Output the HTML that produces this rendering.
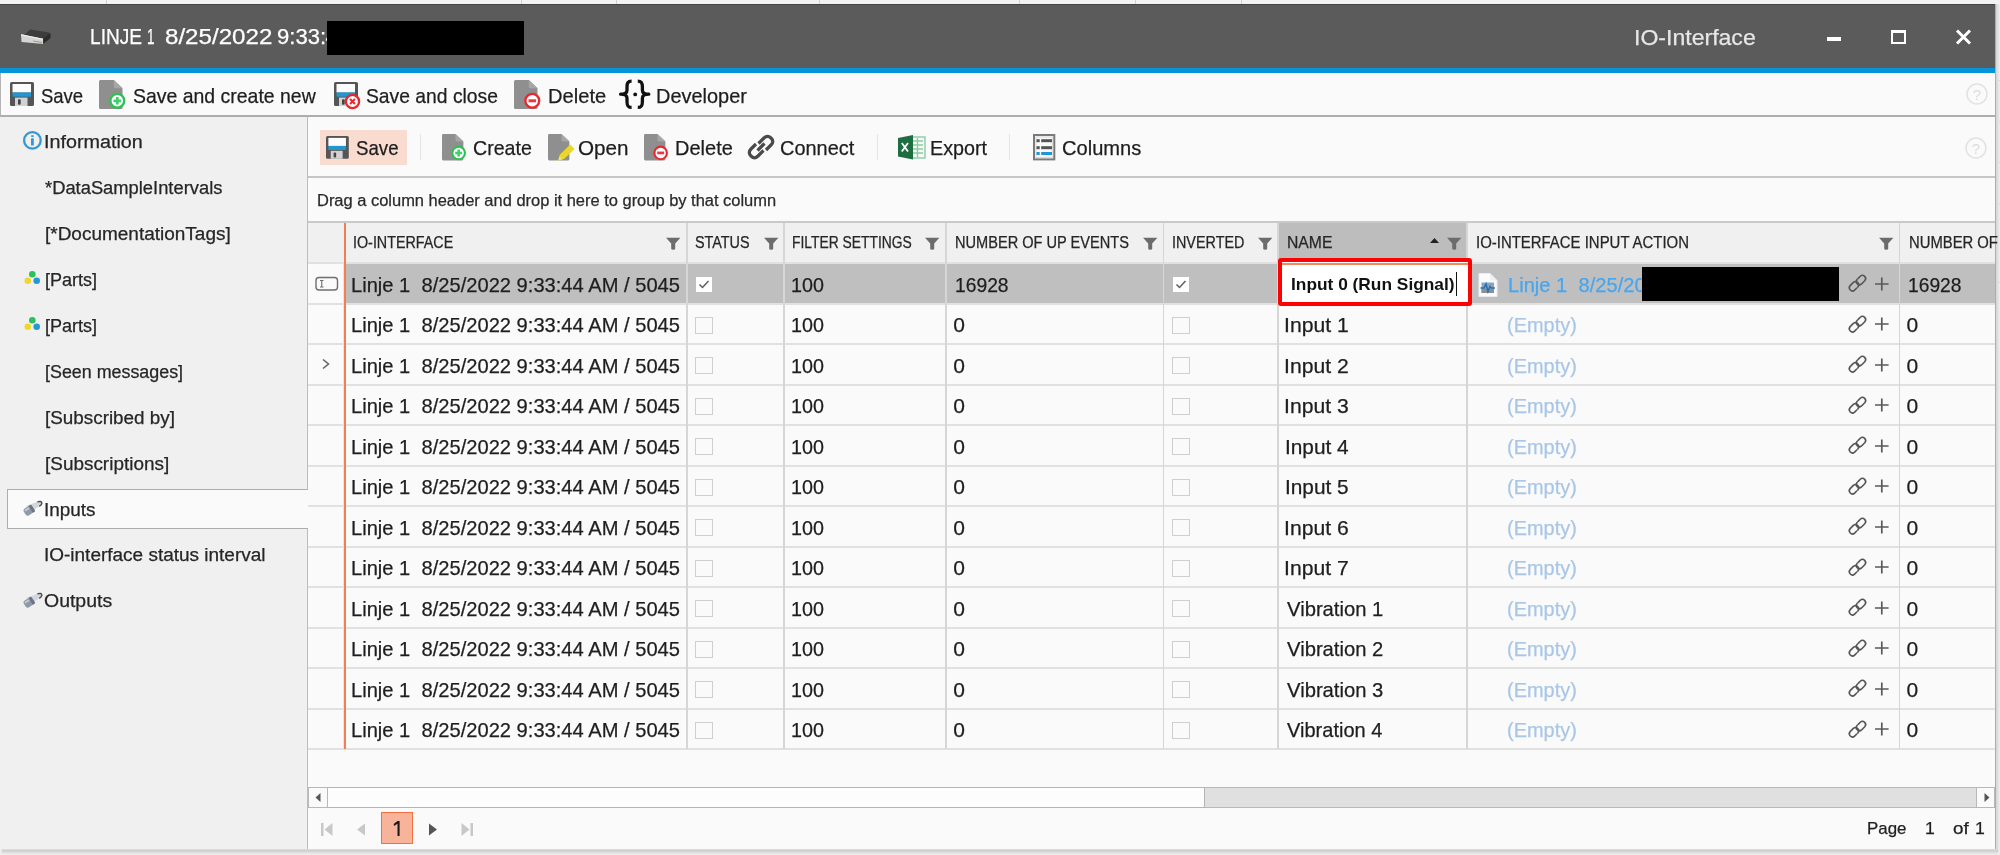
<!DOCTYPE html>
<html><head><meta charset="utf-8">
<style>
*{margin:0;padding:0;box-sizing:border-box}
html,body{width:2000px;height:855px;overflow:hidden;background:#ededed;font-family:"Liberation Sans",sans-serif;position:relative}
.a{position:absolute}
svg.a{overflow:visible}
.t{position:absolute;white-space:pre;line-height:1;-webkit-text-stroke:0.25px currentColor;transform-origin:0 0}
</style></head><body>
<div id="root" style="position:absolute;left:0;top:0;width:2000px;height:855px;will-change:transform;overflow:hidden">
<div class="a" style="left:0px;top:0px;width:2000px;height:855px;background:#ececec"></div>
<div class="a" style="left:0px;top:0px;width:2000px;height:4px;background:#f3f3f3"></div>
<div class="a" style="left:106px;top:0px;width:1px;height:4px;background:#d2d2d2"></div>
<div class="a" style="left:521px;top:0px;width:1px;height:4px;background:#d2d2d2"></div>
<div class="a" style="left:616px;top:0px;width:1px;height:4px;background:#d2d2d2"></div>
<div class="a" style="left:819px;top:0px;width:1px;height:4px;background:#d2d2d2"></div>
<div class="a" style="left:1019px;top:0px;width:1px;height:4px;background:#d2d2d2"></div>
<div class="a" style="left:1135px;top:0px;width:1px;height:4px;background:#d2d2d2"></div>
<div class="a" style="left:1241px;top:0px;width:1px;height:4px;background:#d2d2d2"></div>
<div class="a" style="left:1996px;top:80px;width:4px;height:1px;background:#d6d6d6"></div>
<div class="a" style="left:1996px;top:121px;width:4px;height:1px;background:#d6d6d6"></div>
<div class="a" style="left:1996px;top:162px;width:4px;height:1px;background:#d6d6d6"></div>
<div class="a" style="left:1996px;top:203px;width:4px;height:1px;background:#d6d6d6"></div>
<div class="a" style="left:1996px;top:282px;width:4px;height:1px;background:#d6d6d6"></div>
<div class="a" style="left:0px;top:4px;width:1996px;height:845px;background:#fafafa;border-right:1.5px solid #adadad"></div>
<div class="a" style="left:1996px;top:4px;width:3px;height:848px;background:linear-gradient(90deg,#d4d4d4,#e8e8e8)"></div>
<div class="a" style="left:2px;top:849px;width:1996px;height:5px;background:linear-gradient(#e0e0e0,#cfcfcf 30%,#d6d6d6 55%,#ececec)"></div>
<div class="a" style="left:0px;top:4px;width:1995px;height:64px;background:#5b5b5b;border-top:1px solid #444"></div>
<div class="a" style="left:0px;top:68px;width:1995px;height:5.5px;background:#0594d8"></div>
<div class="a" style="left:0px;top:73px;width:1995px;height:44px;background:#fafafa;border-left:1px solid #b4b4b4;border-bottom:2px solid #adadad"></div>
<div class="a" style="left:0px;top:117px;width:308px;height:732px;background:#f0f0f0;border-right:1px solid #bdbdbd"></div>
<div class="a" style="left:308px;top:117px;width:1687px;height:61px;background:#fafafa;border-bottom:2px solid #c6c6c6"></div>
<div class="a" style="left:308px;top:178px;width:1687px;height:45px;background:#fafafa;border-bottom:2px solid #c9c9c9"></div>
<svg class="a" style="left:18px;top:24px" width="36" height="22" viewBox="0 0 36 22">
<path d="M12 5.5 L31 8.5 L33 10.5 L25.5 17 L4 13.5 Z" fill="#3c3c3c"/>
<path d="M3 10.3 L25.2 14.8 L25.2 20 L3.5 18 Z" fill="#d4d4d4"/>
<path d="M3 10.3 L25.2 14.8 L25.2 15.8 L3 11.5 Z" fill="#f0f0f0"/>
<path d="M25.2 14.8 L32.5 9.3 L32.5 14 L25.2 20 Z" fill="#2c2c2c"/>
<path d="M15 16.5 L24 18 L24 19 L15 17.5 Z" fill="#a89c70"/>
</svg>
<div class="t" style="left:89.90px;top:25.75px;font-size:22.5px;color:#ffffff;transform:scaleX(0.8492)">LINJE</div>
<div class="t" style="left:146.50px;top:25.75px;font-size:22.5px;color:#ffffff;transform:scaleX(0.6000)">1</div>
<div class="t" style="left:164.63px;top:25.75px;font-size:22.5px;color:#ffffff;transform:scaleX(1.0724)">8/25/2022</div>
<div class="t" style="left:276.72px;top:25.75px;font-size:22.5px;color:#ffffff;transform:scaleX(0.9809)">9:33:</div>
<div class="t" style="left:325.50px;top:25.75px;font-size:22.5px;color:#ffffff">4</div>
<div class="a" style="left:327px;top:21px;width:197px;height:34px;background:#000"></div>
<div class="t" style="left:1633.50px;top:27.18px;font-size:22px;color:#e6e6e6;transform:scaleX(1.0478)">IO-Interface</div>
<div class="a" style="left:1827px;top:37px;width:14px;height:4px;background:#fff"></div>
<div class="a" style="left:1891px;top:30px;width:15px;height:14px;border:2px solid #fff;border-top-width:3px"></div>
<svg class="a" style="left:1955px;top:29px" width="17" height="16" viewBox="0 0 17 16"><path d="M2 1.5 L15 14.5 M15 1.5 L2 14.5" stroke="#fff" stroke-width="3"/></svg>
<svg class="a" style="left:9.5px;top:82.3px" width="28.00" height="28.00" viewBox="0 0 28 28"><rect x="0" y="0" width="24" height="24" rx="1.6" fill="#555"/><rect x="2.5" y="2" width="18.5" height="8.6" fill="#fcfcfc"/><rect x="2.5" y="10.4" width="18.5" height="4.3" fill="#2196d0"/><rect x="5" y="15.6" width="12.5" height="8.4" fill="#d2d2d2"/><rect x="8" y="17.3" width="2.7" height="5.4" rx="1" fill="#444"/></svg>
<div class="t" style="left:41.42px;top:84.92px;font-size:21px;color:#1e1e1e;transform:scaleX(0.8804)">Save</div>
<svg class="a" style="left:99.25px;top:80px" width="30.00" height="30.00" viewBox="0 0 30 30"><path d="M1.5 0 H14.8 L23.5 8.2 V27.5 Q23.5 29 22 29 H1.5 Q0 29 0 27.5 V1.5 Q0 0 1.5 0 Z" fill="#8f8f8f"/><path d="M14.8 0 L14.8 6.7 Q14.8 8.2 16.3 8.2 L23.5 8.2 Z" fill="#a6a6a6"/><circle cx="18.3" cy="20.8" r="6.9" fill="#fff" stroke="#2cc155" stroke-width="2.3"/><path d="M18.3 17 L18.3 24.6 M14.5 20.8 L22.1 20.8" stroke="#3fd068" stroke-width="2.8"/></svg>
<div class="t" style="left:132.67px;top:84.92px;font-size:21px;color:#1e1e1e;transform:scaleX(0.9259)">Save and create new</div>
<svg class="a" style="left:333.5px;top:82.3px" width="28.00" height="28.00" viewBox="0 0 28 28"><rect x="0" y="0" width="24" height="24" rx="1.6" fill="#555"/><rect x="2.5" y="2" width="18.5" height="8.6" fill="#fcfcfc"/><rect x="2.5" y="10.4" width="18.5" height="4.3" fill="#2196d0"/><rect x="5" y="15.6" width="12.5" height="8.4" fill="#d2d2d2"/><rect x="8" y="17.3" width="2.7" height="5.4" rx="1" fill="#444"/><circle cx="18.5" cy="19.5" r="6.6" fill="#fff" stroke="#e8282e" stroke-width="2.4"/><path d="M16 17 L21 22 M21 17 L16 22" stroke="#e8282e" stroke-width="2"/></svg>
<div class="t" style="left:365.68px;top:84.92px;font-size:21px;color:#1e1e1e;transform:scaleX(0.9190)">Save and close</div>
<svg class="a" style="left:513.6px;top:80px" width="30.00" height="30.00" viewBox="0 0 30 30"><path d="M1.5 0 H14.8 L23.5 8.2 V27.5 Q23.5 29 22 29 H1.5 Q0 29 0 27.5 V1.5 Q0 0 1.5 0 Z" fill="#8f8f8f"/><path d="M14.8 0 L14.8 6.7 Q14.8 8.2 16.3 8.2 L23.5 8.2 Z" fill="#a6a6a6"/><circle cx="18.3" cy="20.8" r="6.9" fill="#fff" stroke="#e8282e" stroke-width="2.3"/><path d="M14.5 20.8 L22.1 20.8" stroke="#ea3a40" stroke-width="3"/></svg>
<div class="t" style="left:547.84px;top:84.92px;font-size:21px;color:#1e1e1e;transform:scaleX(0.9593)">Delete</div>
<svg class="a" style="left:619px;top:79px" width="32" height="32" viewBox="0 0 32 32"><g fill="none" stroke="#111" stroke-width="3.3" stroke-linejoin="round">
<path d="M12.6 2.2 C8.6 2.2 8 4.4 8 8 L8 11.2 C8 13.6 5.8 15.2 1.6 15.2 C5.8 15.2 8 16.8 8 19.2 L8 22.4 C8 26 8.6 28.4 12.6 28.4"/>
<path d="M18.8 2.2 C22.8 2.2 23.4 4.4 23.4 8 L23.4 11.2 C23.4 13.6 25.6 15.2 29.8 15.2 C25.6 15.2 23.4 16.8 23.4 19.2 L23.4 22.4 C23.4 26 22.8 28.4 18.8 28.4"/></g>
<circle cx="16.2" cy="15.4" r="1.9" fill="#111"/></svg>
<div class="t" style="left:655.65px;top:84.92px;font-size:21px;color:#1e1e1e;transform:scaleX(0.9495)">Developer</div>
<svg class="a" style="left:1966px;top:83px" width="22" height="22" viewBox="0 0 22 22"><circle cx="11" cy="11" r="10" fill="none" stroke="#e2e2e2" stroke-width="1.5"/><text x="11" y="16.5" font-family="Liberation Sans" font-size="15" fill="#dcdcdc" text-anchor="middle">?</text></svg>
<div class="a" style="left:7px;top:489px;width:301px;height:40px;background:#fafafa;border:1.3px solid #adadad;border-right:none"></div>
<div class="t" style="left:44.30px;top:133.36px;font-size:18px;color:#262626;transform:scaleX(1.0966)">Information</div>
<div class="t" style="left:45.40px;top:179.36px;font-size:18px;color:#262626;transform:scaleX(1.0190)">*DataSampleIntervals</div>
<div class="t" style="left:44.85px;top:225.36px;font-size:18px;color:#262626;transform:scaleX(1.0546)">[*DocumentationTags]</div>
<div class="t" style="left:44.90px;top:271.46px;font-size:18px;color:#262626">[Parts]</div>
<div class="t" style="left:44.90px;top:317.26px;font-size:18px;color:#262626">[Parts]</div>
<div class="t" style="left:44.91px;top:363.16px;font-size:18px;color:#262626;transform:scaleX(0.9927)">[Seen messages]</div>
<div class="t" style="left:44.85px;top:409.26px;font-size:18px;color:#262626;transform:scaleX(1.0475)">[Subscribed by]</div>
<div class="t" style="left:44.85px;top:454.86px;font-size:18px;color:#262626;transform:scaleX(1.0517)">[Subscriptions]</div>
<div class="t" style="left:44.35px;top:500.76px;font-size:18px;color:#262626;transform:scaleX(1.0521)">Inputs</div>
<div class="t" style="left:44.35px;top:546.16px;font-size:18px;color:#262626;transform:scaleX(1.0543)">IO-interface status interval</div>
<div class="t" style="left:44.32px;top:591.96px;font-size:18px;color:#262626;transform:scaleX(1.0806)">Outputs</div>
<svg class="a" style="left:22px;top:130px" width="21" height="21" viewBox="0 0 21 21"><circle cx="10.4" cy="10.4" r="8.3" fill="none" stroke="#3598d0" stroke-width="2.3"/><rect x="9.2" y="5.2" width="2.4" height="1.8" fill="#3598d0"/><rect x="9" y="8.2" width="2.8" height="7.4" rx="0.6" fill="#3598d0"/></svg>
<svg class="a" style="left:23.8px;top:270px" width="18" height="16" viewBox="0 0 18 16"><circle cx="8.3" cy="4.2" r="3.3" fill="#2fbf5c"/><circle cx="3.8" cy="10.7" r="3.3" fill="#f0d828"/><circle cx="12.7" cy="10.7" r="3.3" fill="#2a96d0"/></svg>
<svg class="a" style="left:23.8px;top:316px" width="18" height="16" viewBox="0 0 18 16"><circle cx="8.3" cy="4.2" r="3.3" fill="#2fbf5c"/><circle cx="3.8" cy="10.7" r="3.3" fill="#f0d828"/><circle cx="12.7" cy="10.7" r="3.3" fill="#2a96d0"/></svg>
<svg class="a" style="left:21px;top:499px" width="24" height="18" viewBox="0 0 24 18"><path d="M5 7 L16.5 2.8 Q20.5 1.6 20.8 4.2 Q20.8 6 18.5 7.3 L11 12 Z" fill="#d3d7dc"/>
<path d="M16.3 2.9 Q20.5 1.6 20.8 4.2 Q20.8 6 18.3 7.4" fill="none" stroke="#4e4e4e" stroke-width="1.5"/>
<g transform="rotate(-33 8 11.5)"><rect x="3" y="7.5" width="10" height="8" rx="2.5" fill="#8e9aa9"/><rect x="10" y="7.5" width="3" height="8" rx="1" fill="#6c7684"/><rect x="4.5" y="8.5" width="5" height="2" fill="#c3cad3"/></g></svg>
<svg class="a" style="left:21px;top:591px" width="24" height="18" viewBox="0 0 24 18"><path d="M5 7 L16.5 2.8 Q20.5 1.6 20.8 4.2 Q20.8 6 18.5 7.3 L11 12 Z" fill="#d3d7dc"/>
<path d="M16.3 2.9 Q20.5 1.6 20.8 4.2 Q20.8 6 18.3 7.4" fill="none" stroke="#4e4e4e" stroke-width="1.5"/>
<g transform="rotate(-33 8 11.5)"><rect x="3" y="7.5" width="10" height="8" rx="2.5" fill="#8e9aa9"/><rect x="10" y="7.5" width="3" height="8" rx="1" fill="#6c7684"/><rect x="4.5" y="8.5" width="5" height="2" fill="#c3cad3"/></g></svg>
<div class="a" style="left:320px;top:130px;width:87px;height:35px;background:#f9dbd0"></div>
<svg class="a" style="left:325.6px;top:136px" width="26.60" height="26.60" viewBox="0 0 28 28"><rect x="0" y="0" width="24" height="24" rx="1.6" fill="#555"/><rect x="2.5" y="2" width="18.5" height="8.6" fill="#fcfcfc"/><rect x="2.5" y="10.4" width="18.5" height="4.3" fill="#2196d0"/><rect x="5" y="15.6" width="12.5" height="8.4" fill="#d2d2d2"/><rect x="8" y="17.3" width="2.7" height="5.4" rx="1" fill="#444"/></svg>
<div class="t" style="left:355.81px;top:137.12px;font-size:21px;color:#1e1e1e;transform:scaleX(0.8891)">Save</div>
<div class="a" style="left:420px;top:134px;width:1px;height:26px;background:#e4e4e4"></div>
<svg class="a" style="left:441.8px;top:134px" width="27.30" height="27.30" viewBox="0 0 30 30"><path d="M1.5 0 H14.8 L23.5 8.2 V27.5 Q23.5 29 22 29 H1.5 Q0 29 0 27.5 V1.5 Q0 0 1.5 0 Z" fill="#8f8f8f"/><path d="M14.8 0 L14.8 6.7 Q14.8 8.2 16.3 8.2 L23.5 8.2 Z" fill="#a6a6a6"/><circle cx="18.3" cy="20.8" r="6.9" fill="#fff" stroke="#2cc155" stroke-width="2.3"/><path d="M18.3 17 L18.3 24.6 M14.5 20.8 L22.1 20.8" stroke="#3fd068" stroke-width="2.8"/></svg>
<div class="t" style="left:473.07px;top:137.12px;font-size:21px;color:#1e1e1e;transform:scaleX(0.9344)">Create</div>
<svg class="a" style="left:547.8px;top:133.8px" width="27.30" height="27.30" viewBox="0 0 30 30"><path d="M1.5 0 H14.8 L23.5 8.2 V27.5 Q23.5 29 22 29 H1.5 Q0 29 0 27.5 V1.5 Q0 0 1.5 0 Z" fill="#8f8f8f"/><path d="M14.8 0 L14.8 6.7 Q14.8 8.2 16.3 8.2 L23.5 8.2 Z" fill="#a6a6a6"/><path d="M11.3 29.3 L12.9 22.7 L24.5 11.5 L29.1 16.6 L17.6 27.6 Z" fill="#ebd727"/><path d="M11.3 29.3 L12.6 24.5 L15.8 27.6 Z" fill="#f3e27a"/></svg>
<div class="t" style="left:578.02px;top:137.12px;font-size:21px;color:#1e1e1e;transform:scaleX(0.9837)">Open</div>
<svg class="a" style="left:644.3px;top:134px" width="27.30" height="27.30" viewBox="0 0 30 30"><path d="M1.5 0 H14.8 L23.5 8.2 V27.5 Q23.5 29 22 29 H1.5 Q0 29 0 27.5 V1.5 Q0 0 1.5 0 Z" fill="#8f8f8f"/><path d="M14.8 0 L14.8 6.7 Q14.8 8.2 16.3 8.2 L23.5 8.2 Z" fill="#a6a6a6"/><circle cx="18.3" cy="20.8" r="6.9" fill="#fff" stroke="#e8282e" stroke-width="2.3"/><path d="M14.5 20.8 L22.1 20.8" stroke="#ea3a40" stroke-width="3"/></svg>
<div class="t" style="left:675.05px;top:137.12px;font-size:21px;color:#1e1e1e;transform:scaleX(0.9525)">Delete</div>
<svg class="a" style="left:747px;top:133px" width="28" height="28" viewBox="0 0 28 28"><g fill="none" stroke="#4a4a4a" stroke-width="3.2"><path d="M11.5 10.5 L17 5 Q20.5 1.5 24 5 Q27.5 8.5 24 12 L19 17"/><path d="M16.5 17.5 L11 23 Q7.5 26.5 4 23 Q0.5 19.5 4 16 L9 11"/><path d="M10.5 17.5 L17.5 10.5"/></g></svg>
<div class="t" style="left:779.55px;top:137.12px;font-size:21px;color:#1e1e1e;transform:scaleX(0.9494)">Connect</div>
<div class="a" style="left:877px;top:134px;width:1px;height:26px;background:#e4e4e4"></div>
<svg class="a" style="left:897.6px;top:135px" width="28" height="25" viewBox="0 0 28 25"><rect x="11" y="2" width="16" height="21" fill="#f4faf6" stroke="#7cc39a" stroke-width="1.2"/>
<path d="M14 6 H25 M14 10 H25 M14 14 H25 M14 18 H25 M19.5 3 V22" stroke="#8fcaa6" stroke-width="1.3"/>
<path d="M0 3 L15 0 L15 24.4 L0 21.4 Z" fill="#1d6f42"/>
<path d="M3.8 8 L10 16.5 M10 8 L3.8 16.5" stroke="#fff" stroke-width="1.8"/></svg>
<div class="t" style="left:929.66px;top:137.12px;font-size:21px;color:#1e1e1e;transform:scaleX(0.9400)">Export</div>
<div class="a" style="left:1009px;top:134px;width:1px;height:26px;background:#e4e4e4"></div>
<svg class="a" style="left:1032.9px;top:133.8px" width="23" height="27" viewBox="0 0 23 27"><rect x="1" y="1" width="20.3" height="24.4" fill="#fafafa" stroke="#7a7a7a" stroke-width="2"/>
<rect x="3" y="3" width="16.3" height="20.4" fill="none" stroke="#d8d8d8" stroke-width="1"/>
<rect x="3.5" y="5.2" width="3.2" height="3" fill="#555"/><rect x="8.2" y="5.2" width="10.8" height="3" fill="#555"/>
<rect x="3.5" y="12.2" width="3.2" height="3" fill="#555"/><rect x="8.2" y="12.2" width="10.8" height="3" fill="#555"/>
<rect x="3.5" y="18" width="3.2" height="3" fill="#1e96dc"/><rect x="8.2" y="18" width="10.8" height="3" fill="#1e96dc"/></svg>
<div class="t" style="left:1061.84px;top:137.12px;font-size:21px;color:#1e1e1e;transform:scaleX(0.9568)">Columns</div>
<svg class="a" style="left:1965px;top:137px" width="22" height="22" viewBox="0 0 22 22"><circle cx="11" cy="11" r="10" fill="none" stroke="#e2e2e2" stroke-width="1.5"/><text x="11" y="16.5" font-family="Liberation Sans" font-size="15" fill="#dcdcdc" text-anchor="middle">?</text></svg>
<div class="t" style="left:316.87px;top:192.66px;font-size:16px;color:#2a2a2a;transform:scaleX(1.0283)">Drag a column header and drop it here to group by that column</div>
<div class="a" style="left:308px;top:223px;width:1687px;height:40px;background:#f0f0f0"></div>
<div class="a" style="left:1279px;top:223px;width:188px;height:40px;background:#bdbdbd"></div>
<div class="a" style="left:346px;top:263.0px;width:1649px;height:40.5px;background:#bfbfbf"></div>
<div class="a" style="left:346px;top:303.5px;width:1649px;height:40.5px;background:#fafafa"></div>
<div class="a" style="left:346px;top:344.0px;width:1649px;height:40.5px;background:#fafafa"></div>
<div class="a" style="left:346px;top:384.5px;width:1649px;height:40.5px;background:#fafafa"></div>
<div class="a" style="left:346px;top:425.0px;width:1649px;height:40.5px;background:#fafafa"></div>
<div class="a" style="left:346px;top:465.5px;width:1649px;height:40.5px;background:#fafafa"></div>
<div class="a" style="left:346px;top:506.0px;width:1649px;height:40.5px;background:#fafafa"></div>
<div class="a" style="left:346px;top:546.5px;width:1649px;height:40.5px;background:#fafafa"></div>
<div class="a" style="left:346px;top:587.0px;width:1649px;height:40.5px;background:#fafafa"></div>
<div class="a" style="left:346px;top:627.5px;width:1649px;height:40.5px;background:#fafafa"></div>
<div class="a" style="left:346px;top:668.0px;width:1649px;height:40.5px;background:#fafafa"></div>
<div class="a" style="left:346px;top:708.5px;width:1649px;height:40.5px;background:#fafafa"></div>
<div class="a" style="left:308px;top:262.0px;width:1687px;height:2px;background:#e1e1e1"></div>
<div class="a" style="left:308px;top:302.5px;width:1687px;height:2px;background:#e1e1e1"></div>
<div class="a" style="left:308px;top:343.0px;width:1687px;height:2px;background:#e1e1e1"></div>
<div class="a" style="left:308px;top:383.5px;width:1687px;height:2px;background:#e1e1e1"></div>
<div class="a" style="left:308px;top:424.0px;width:1687px;height:2px;background:#e1e1e1"></div>
<div class="a" style="left:308px;top:464.5px;width:1687px;height:2px;background:#e1e1e1"></div>
<div class="a" style="left:308px;top:505.0px;width:1687px;height:2px;background:#e1e1e1"></div>
<div class="a" style="left:308px;top:545.5px;width:1687px;height:2px;background:#e1e1e1"></div>
<div class="a" style="left:308px;top:586.0px;width:1687px;height:2px;background:#e1e1e1"></div>
<div class="a" style="left:308px;top:626.5px;width:1687px;height:2px;background:#e1e1e1"></div>
<div class="a" style="left:308px;top:667.0px;width:1687px;height:2px;background:#e1e1e1"></div>
<div class="a" style="left:308px;top:707.5px;width:1687px;height:2px;background:#e1e1e1"></div>
<div class="a" style="left:308px;top:748.0px;width:1687px;height:2px;background:#e1e1e1"></div>
<div class="a" style="left:686px;top:223px;width:1.7px;height:526.0px;background:#d6d6d6"></div>
<div class="a" style="left:783px;top:223px;width:1.7px;height:526.0px;background:#d6d6d6"></div>
<div class="a" style="left:945px;top:223px;width:1.7px;height:526.0px;background:#d6d6d6"></div>
<div class="a" style="left:1162.6px;top:223px;width:1.7px;height:526.0px;background:#d6d6d6"></div>
<div class="a" style="left:1277.2px;top:223px;width:1.7px;height:526.0px;background:#d6d6d6"></div>
<div class="a" style="left:1466.4px;top:223px;width:1.7px;height:526.0px;background:#d6d6d6"></div>
<div class="a" style="left:1898.8px;top:223px;width:1.7px;height:526.0px;background:#d6d6d6"></div>
<div class="a" style="left:343px;top:263px;width:1px;height:486.0px;background:#e6e6e6"></div>
<div class="a" style="left:344px;top:223px;width:2px;height:526.0px;background:#f07f56"></div>
<div class="t" style="left:352.61px;top:234.86px;font-size:16px;color:#262626;transform:scaleX(0.8946)">IO-INTERFACE</div>
<div class="t" style="left:694.85px;top:234.86px;font-size:16px;color:#262626;transform:scaleX(0.8983)">STATUS</div>
<div class="t" style="left:791.88px;top:234.86px;font-size:16px;color:#262626;transform:scaleX(0.8657)">FILTER SETTINGS</div>
<div class="t" style="left:955.09px;top:234.86px;font-size:16px;color:#262626;transform:scaleX(0.9111)">NUMBER OF UP EVENTS</div>
<div class="t" style="left:1172.00px;top:234.86px;font-size:16px;color:#262626;transform:scaleX(0.8975)">INVERTED</div>
<div class="t" style="left:1286.92px;top:234.86px;font-size:16px;color:#262626;transform:scaleX(0.9822)">NAME</div>
<div class="t" style="left:1476.47px;top:234.86px;font-size:16px;color:#262626;transform:scaleX(0.9336)">IO-INTERFACE INPUT ACTION</div>
<div class="t" style="left:1908.57px;top:234.86px;font-size:16px;color:#262626;transform:scaleX(0.9263)">NUMBER OF</div>
<svg class="a" style="left:666px;top:237px" width="15" height="14" viewBox="0 0 15 14"><path d="M0 0.7 H14.4 L9.2 6.4 V11.8 Q9.2 12.7 7.2 12.7 Q5.2 12.7 5.2 11.8 V6.4 Z" fill="#6c6c6c"/></svg>
<svg class="a" style="left:764px;top:237px" width="15" height="14" viewBox="0 0 15 14"><path d="M0 0.7 H14.4 L9.2 6.4 V11.8 Q9.2 12.7 7.2 12.7 Q5.2 12.7 5.2 11.8 V6.4 Z" fill="#6c6c6c"/></svg>
<svg class="a" style="left:925px;top:237px" width="15" height="14" viewBox="0 0 15 14"><path d="M0 0.7 H14.4 L9.2 6.4 V11.8 Q9.2 12.7 7.2 12.7 Q5.2 12.7 5.2 11.8 V6.4 Z" fill="#6c6c6c"/></svg>
<svg class="a" style="left:1143px;top:237px" width="15" height="14" viewBox="0 0 15 14"><path d="M0 0.7 H14.4 L9.2 6.4 V11.8 Q9.2 12.7 7.2 12.7 Q5.2 12.7 5.2 11.8 V6.4 Z" fill="#6c6c6c"/></svg>
<svg class="a" style="left:1258px;top:237px" width="15" height="14" viewBox="0 0 15 14"><path d="M0 0.7 H14.4 L9.2 6.4 V11.8 Q9.2 12.7 7.2 12.7 Q5.2 12.7 5.2 11.8 V6.4 Z" fill="#6c6c6c"/></svg>
<svg class="a" style="left:1447px;top:237px" width="15" height="14" viewBox="0 0 15 14"><path d="M0 0.7 H14.4 L9.2 6.4 V11.8 Q9.2 12.7 7.2 12.7 Q5.2 12.7 5.2 11.8 V6.4 Z" fill="#6c6c6c"/></svg>
<svg class="a" style="left:1879px;top:237px" width="15" height="14" viewBox="0 0 15 14"><path d="M0 0.7 H14.4 L9.2 6.4 V11.8 Q9.2 12.7 7.2 12.7 Q5.2 12.7 5.2 11.8 V6.4 Z" fill="#6c6c6c"/></svg>
<svg class="a" style="left:1430px;top:237px" width="9" height="7" viewBox="0 0 9 7"><path d="M0 6 L4.5 1 L9 6 Z" fill="#222"/></svg>
<div class="t" style="left:350.79px;top:273.92px;font-size:21px;color:#1e1e1e;transform:scaleX(0.9583)">Linje 1  8/25/2022 9:33:44 AM / 5045</div>
<div class="t" style="left:791.31px;top:273.92px;font-size:21px;color:#1e1e1e;transform:scaleX(0.9394)">100</div>
<div class="t" style="left:954.58px;top:273.92px;font-size:21px;color:#1e1e1e;transform:scaleX(0.9175)">16928</div>
<div class="t" style="left:1907.88px;top:273.92px;font-size:21px;color:#1e1e1e;transform:scaleX(0.9158)">16928</div>
<div class="a" style="left:696px;top:277.0px;width:16px;height:15px;background:#fff"></div>
<div class="a" style="left:1173px;top:277.0px;width:16px;height:15px;background:#fff"></div>
<svg class="a" style="left:698px;top:279.0px" width="12" height="11" viewBox="0 0 12 11"><path d="M1.5 5.5 L4.5 8.5 L10.5 2" fill="none" stroke="#5e5e5e" stroke-width="1.5"/></svg>
<svg class="a" style="left:1175px;top:279.0px" width="12" height="11" viewBox="0 0 12 11"><path d="M1.5 5.5 L4.5 8.5 L10.5 2" fill="none" stroke="#5e5e5e" stroke-width="1.5"/></svg>
<svg class="a" style="left:1846.8px;top:273.2px" width="20" height="20" viewBox="0 0 22 22"><g fill="none" stroke="#555" stroke-width="1.75" stroke-linecap="round"><path d="M12.3 5.86 L14.6 3.56 A3.5 3.5 0 0 1 19.54 8.5 L16.0 12.04 A3.5 3.5 0 0 1 11.06 7.1"/><path d="M10.7 16.54 L8.4 18.84 A3.5 3.5 0 0 1 3.46 13.9 L7.0 10.36 A3.5 3.5 0 0 1 11.94 15.3"/></g></svg>
<svg class="a" style="left:1874px;top:276.5px" width="16" height="16" viewBox="0 0 16 16"><path d="M7.8 0.5 V13.5 M1 7 H14.6" stroke="#5a5a5a" stroke-width="1.7"/></svg>
<div class="t" style="left:350.79px;top:314.42px;font-size:21px;color:#1e1e1e;transform:scaleX(0.9583)">Linje 1  8/25/2022 9:33:44 AM / 5045</div>
<div class="t" style="left:791.31px;top:314.42px;font-size:21px;color:#1e1e1e;transform:scaleX(0.9394)">100</div>
<div class="t" style="left:953.20px;top:314.42px;font-size:21px;color:#1e1e1e">0</div>
<div class="t" style="left:1906.40px;top:314.42px;font-size:21px;color:#1e1e1e">0</div>
<div class="a" style="left:695px;top:316.5px;width:18px;height:17px;border:1.5px solid #cfcfcf;background:#fafafa"></div>
<div class="a" style="left:1172px;top:316.5px;width:18px;height:17px;border:1.5px solid #cfcfcf;background:#fafafa"></div>
<div class="t" style="left:1284.48px;top:314.42px;font-size:21px;color:#1e1e1e;transform:scaleX(1.0082)">Input 1</div>
<div class="t" style="left:1506.95px;top:314.42px;font-size:21px;color:#a9c6e6;transform:scaleX(0.9493)">(Empty)</div>
<svg class="a" style="left:1846.8px;top:313.7px" width="20" height="20" viewBox="0 0 22 22"><g fill="none" stroke="#555" stroke-width="1.75" stroke-linecap="round"><path d="M12.3 5.86 L14.6 3.56 A3.5 3.5 0 0 1 19.54 8.5 L16.0 12.04 A3.5 3.5 0 0 1 11.06 7.1"/><path d="M10.7 16.54 L8.4 18.84 A3.5 3.5 0 0 1 3.46 13.9 L7.0 10.36 A3.5 3.5 0 0 1 11.94 15.3"/></g></svg>
<svg class="a" style="left:1874px;top:317.0px" width="16" height="16" viewBox="0 0 16 16"><path d="M7.8 0.5 V13.5 M1 7 H14.6" stroke="#5a5a5a" stroke-width="1.7"/></svg>
<div class="t" style="left:350.79px;top:354.92px;font-size:21px;color:#1e1e1e;transform:scaleX(0.9583)">Linje 1  8/25/2022 9:33:44 AM / 5045</div>
<div class="t" style="left:791.31px;top:354.92px;font-size:21px;color:#1e1e1e;transform:scaleX(0.9394)">100</div>
<div class="t" style="left:953.20px;top:354.92px;font-size:21px;color:#1e1e1e">0</div>
<div class="t" style="left:1906.40px;top:354.92px;font-size:21px;color:#1e1e1e">0</div>
<div class="a" style="left:695px;top:357.0px;width:18px;height:17px;border:1.5px solid #cfcfcf;background:#fafafa"></div>
<div class="a" style="left:1172px;top:357.0px;width:18px;height:17px;border:1.5px solid #cfcfcf;background:#fafafa"></div>
<div class="t" style="left:1284.48px;top:354.92px;font-size:21px;color:#1e1e1e;transform:scaleX(1.0082)">Input 2</div>
<div class="t" style="left:1506.95px;top:354.92px;font-size:21px;color:#a9c6e6;transform:scaleX(0.9493)">(Empty)</div>
<svg class="a" style="left:1846.8px;top:354.2px" width="20" height="20" viewBox="0 0 22 22"><g fill="none" stroke="#555" stroke-width="1.75" stroke-linecap="round"><path d="M12.3 5.86 L14.6 3.56 A3.5 3.5 0 0 1 19.54 8.5 L16.0 12.04 A3.5 3.5 0 0 1 11.06 7.1"/><path d="M10.7 16.54 L8.4 18.84 A3.5 3.5 0 0 1 3.46 13.9 L7.0 10.36 A3.5 3.5 0 0 1 11.94 15.3"/></g></svg>
<svg class="a" style="left:1874px;top:357.5px" width="16" height="16" viewBox="0 0 16 16"><path d="M7.8 0.5 V13.5 M1 7 H14.6" stroke="#5a5a5a" stroke-width="1.7"/></svg>
<svg class="a" style="left:321px;top:358.0px" width="10" height="12" viewBox="0 0 10 12"><path d="M2 1.5 L7.5 6 L2 10.5" fill="none" stroke="#666" stroke-width="1.6"/></svg>
<div class="t" style="left:350.79px;top:395.42px;font-size:21px;color:#1e1e1e;transform:scaleX(0.9583)">Linje 1  8/25/2022 9:33:44 AM / 5045</div>
<div class="t" style="left:791.31px;top:395.42px;font-size:21px;color:#1e1e1e;transform:scaleX(0.9394)">100</div>
<div class="t" style="left:953.20px;top:395.42px;font-size:21px;color:#1e1e1e">0</div>
<div class="t" style="left:1906.40px;top:395.42px;font-size:21px;color:#1e1e1e">0</div>
<div class="a" style="left:695px;top:397.5px;width:18px;height:17px;border:1.5px solid #cfcfcf;background:#fafafa"></div>
<div class="a" style="left:1172px;top:397.5px;width:18px;height:17px;border:1.5px solid #cfcfcf;background:#fafafa"></div>
<div class="t" style="left:1284.48px;top:395.42px;font-size:21px;color:#1e1e1e;transform:scaleX(1.0082)">Input 3</div>
<div class="t" style="left:1506.95px;top:395.42px;font-size:21px;color:#a9c6e6;transform:scaleX(0.9493)">(Empty)</div>
<svg class="a" style="left:1846.8px;top:394.7px" width="20" height="20" viewBox="0 0 22 22"><g fill="none" stroke="#555" stroke-width="1.75" stroke-linecap="round"><path d="M12.3 5.86 L14.6 3.56 A3.5 3.5 0 0 1 19.54 8.5 L16.0 12.04 A3.5 3.5 0 0 1 11.06 7.1"/><path d="M10.7 16.54 L8.4 18.84 A3.5 3.5 0 0 1 3.46 13.9 L7.0 10.36 A3.5 3.5 0 0 1 11.94 15.3"/></g></svg>
<svg class="a" style="left:1874px;top:398.0px" width="16" height="16" viewBox="0 0 16 16"><path d="M7.8 0.5 V13.5 M1 7 H14.6" stroke="#5a5a5a" stroke-width="1.7"/></svg>
<div class="t" style="left:350.79px;top:435.92px;font-size:21px;color:#1e1e1e;transform:scaleX(0.9583)">Linje 1  8/25/2022 9:33:44 AM / 5045</div>
<div class="t" style="left:791.31px;top:435.92px;font-size:21px;color:#1e1e1e;transform:scaleX(0.9394)">100</div>
<div class="t" style="left:953.20px;top:435.92px;font-size:21px;color:#1e1e1e">0</div>
<div class="t" style="left:1906.40px;top:435.92px;font-size:21px;color:#1e1e1e">0</div>
<div class="a" style="left:695px;top:438.0px;width:18px;height:17px;border:1.5px solid #cfcfcf;background:#fafafa"></div>
<div class="a" style="left:1172px;top:438.0px;width:18px;height:17px;border:1.5px solid #cfcfcf;background:#fafafa"></div>
<div class="t" style="left:1284.52px;top:435.92px;font-size:21px;color:#1e1e1e;transform:scaleX(0.9919)">Input 4</div>
<div class="t" style="left:1506.95px;top:435.92px;font-size:21px;color:#a9c6e6;transform:scaleX(0.9493)">(Empty)</div>
<svg class="a" style="left:1846.8px;top:435.2px" width="20" height="20" viewBox="0 0 22 22"><g fill="none" stroke="#555" stroke-width="1.75" stroke-linecap="round"><path d="M12.3 5.86 L14.6 3.56 A3.5 3.5 0 0 1 19.54 8.5 L16.0 12.04 A3.5 3.5 0 0 1 11.06 7.1"/><path d="M10.7 16.54 L8.4 18.84 A3.5 3.5 0 0 1 3.46 13.9 L7.0 10.36 A3.5 3.5 0 0 1 11.94 15.3"/></g></svg>
<svg class="a" style="left:1874px;top:438.5px" width="16" height="16" viewBox="0 0 16 16"><path d="M7.8 0.5 V13.5 M1 7 H14.6" stroke="#5a5a5a" stroke-width="1.7"/></svg>
<div class="t" style="left:350.79px;top:476.42px;font-size:21px;color:#1e1e1e;transform:scaleX(0.9583)">Linje 1  8/25/2022 9:33:44 AM / 5045</div>
<div class="t" style="left:791.31px;top:476.42px;font-size:21px;color:#1e1e1e;transform:scaleX(0.9394)">100</div>
<div class="t" style="left:953.20px;top:476.42px;font-size:21px;color:#1e1e1e">0</div>
<div class="t" style="left:1906.40px;top:476.42px;font-size:21px;color:#1e1e1e">0</div>
<div class="a" style="left:695px;top:478.5px;width:18px;height:17px;border:1.5px solid #cfcfcf;background:#fafafa"></div>
<div class="a" style="left:1172px;top:478.5px;width:18px;height:17px;border:1.5px solid #cfcfcf;background:#fafafa"></div>
<div class="t" style="left:1284.52px;top:476.42px;font-size:21px;color:#1e1e1e;transform:scaleX(0.9919)">Input 5</div>
<div class="t" style="left:1506.95px;top:476.42px;font-size:21px;color:#a9c6e6;transform:scaleX(0.9493)">(Empty)</div>
<svg class="a" style="left:1846.8px;top:475.7px" width="20" height="20" viewBox="0 0 22 22"><g fill="none" stroke="#555" stroke-width="1.75" stroke-linecap="round"><path d="M12.3 5.86 L14.6 3.56 A3.5 3.5 0 0 1 19.54 8.5 L16.0 12.04 A3.5 3.5 0 0 1 11.06 7.1"/><path d="M10.7 16.54 L8.4 18.84 A3.5 3.5 0 0 1 3.46 13.9 L7.0 10.36 A3.5 3.5 0 0 1 11.94 15.3"/></g></svg>
<svg class="a" style="left:1874px;top:479.0px" width="16" height="16" viewBox="0 0 16 16"><path d="M7.8 0.5 V13.5 M1 7 H14.6" stroke="#5a5a5a" stroke-width="1.7"/></svg>
<div class="t" style="left:350.79px;top:516.92px;font-size:21px;color:#1e1e1e;transform:scaleX(0.9583)">Linje 1  8/25/2022 9:33:44 AM / 5045</div>
<div class="t" style="left:791.31px;top:516.92px;font-size:21px;color:#1e1e1e;transform:scaleX(0.9394)">100</div>
<div class="t" style="left:953.20px;top:516.92px;font-size:21px;color:#1e1e1e">0</div>
<div class="t" style="left:1906.40px;top:516.92px;font-size:21px;color:#1e1e1e">0</div>
<div class="a" style="left:695px;top:519.0px;width:18px;height:17px;border:1.5px solid #cfcfcf;background:#fafafa"></div>
<div class="a" style="left:1172px;top:519.0px;width:18px;height:17px;border:1.5px solid #cfcfcf;background:#fafafa"></div>
<div class="t" style="left:1284.48px;top:516.92px;font-size:21px;color:#1e1e1e;transform:scaleX(1.0082)">Input 6</div>
<div class="t" style="left:1506.95px;top:516.92px;font-size:21px;color:#a9c6e6;transform:scaleX(0.9493)">(Empty)</div>
<svg class="a" style="left:1846.8px;top:516.2px" width="20" height="20" viewBox="0 0 22 22"><g fill="none" stroke="#555" stroke-width="1.75" stroke-linecap="round"><path d="M12.3 5.86 L14.6 3.56 A3.5 3.5 0 0 1 19.54 8.5 L16.0 12.04 A3.5 3.5 0 0 1 11.06 7.1"/><path d="M10.7 16.54 L8.4 18.84 A3.5 3.5 0 0 1 3.46 13.9 L7.0 10.36 A3.5 3.5 0 0 1 11.94 15.3"/></g></svg>
<svg class="a" style="left:1874px;top:519.5px" width="16" height="16" viewBox="0 0 16 16"><path d="M7.8 0.5 V13.5 M1 7 H14.6" stroke="#5a5a5a" stroke-width="1.7"/></svg>
<div class="t" style="left:350.79px;top:557.42px;font-size:21px;color:#1e1e1e;transform:scaleX(0.9583)">Linje 1  8/25/2022 9:33:44 AM / 5045</div>
<div class="t" style="left:791.31px;top:557.42px;font-size:21px;color:#1e1e1e;transform:scaleX(0.9394)">100</div>
<div class="t" style="left:953.20px;top:557.42px;font-size:21px;color:#1e1e1e">0</div>
<div class="t" style="left:1906.40px;top:557.42px;font-size:21px;color:#1e1e1e">0</div>
<div class="a" style="left:695px;top:559.5px;width:18px;height:17px;border:1.5px solid #cfcfcf;background:#fafafa"></div>
<div class="a" style="left:1172px;top:559.5px;width:18px;height:17px;border:1.5px solid #cfcfcf;background:#fafafa"></div>
<div class="t" style="left:1284.48px;top:557.42px;font-size:21px;color:#1e1e1e;transform:scaleX(1.0082)">Input 7</div>
<div class="t" style="left:1506.95px;top:557.42px;font-size:21px;color:#a9c6e6;transform:scaleX(0.9493)">(Empty)</div>
<svg class="a" style="left:1846.8px;top:556.7px" width="20" height="20" viewBox="0 0 22 22"><g fill="none" stroke="#555" stroke-width="1.75" stroke-linecap="round"><path d="M12.3 5.86 L14.6 3.56 A3.5 3.5 0 0 1 19.54 8.5 L16.0 12.04 A3.5 3.5 0 0 1 11.06 7.1"/><path d="M10.7 16.54 L8.4 18.84 A3.5 3.5 0 0 1 3.46 13.9 L7.0 10.36 A3.5 3.5 0 0 1 11.94 15.3"/></g></svg>
<svg class="a" style="left:1874px;top:560.0px" width="16" height="16" viewBox="0 0 16 16"><path d="M7.8 0.5 V13.5 M1 7 H14.6" stroke="#5a5a5a" stroke-width="1.7"/></svg>
<div class="t" style="left:350.79px;top:597.92px;font-size:21px;color:#1e1e1e;transform:scaleX(0.9583)">Linje 1  8/25/2022 9:33:44 AM / 5045</div>
<div class="t" style="left:791.31px;top:597.92px;font-size:21px;color:#1e1e1e;transform:scaleX(0.9394)">100</div>
<div class="t" style="left:953.20px;top:597.92px;font-size:21px;color:#1e1e1e">0</div>
<div class="t" style="left:1906.40px;top:597.92px;font-size:21px;color:#1e1e1e">0</div>
<div class="a" style="left:695px;top:600.0px;width:18px;height:17px;border:1.5px solid #cfcfcf;background:#fafafa"></div>
<div class="a" style="left:1172px;top:600.0px;width:18px;height:17px;border:1.5px solid #cfcfcf;background:#fafafa"></div>
<div class="t" style="left:1286.50px;top:597.92px;font-size:21px;color:#1e1e1e;transform:scaleX(0.9636)">Vibration 1</div>
<div class="t" style="left:1506.95px;top:597.92px;font-size:21px;color:#a9c6e6;transform:scaleX(0.9493)">(Empty)</div>
<svg class="a" style="left:1846.8px;top:597.2px" width="20" height="20" viewBox="0 0 22 22"><g fill="none" stroke="#555" stroke-width="1.75" stroke-linecap="round"><path d="M12.3 5.86 L14.6 3.56 A3.5 3.5 0 0 1 19.54 8.5 L16.0 12.04 A3.5 3.5 0 0 1 11.06 7.1"/><path d="M10.7 16.54 L8.4 18.84 A3.5 3.5 0 0 1 3.46 13.9 L7.0 10.36 A3.5 3.5 0 0 1 11.94 15.3"/></g></svg>
<svg class="a" style="left:1874px;top:600.5px" width="16" height="16" viewBox="0 0 16 16"><path d="M7.8 0.5 V13.5 M1 7 H14.6" stroke="#5a5a5a" stroke-width="1.7"/></svg>
<div class="t" style="left:350.79px;top:638.42px;font-size:21px;color:#1e1e1e;transform:scaleX(0.9583)">Linje 1  8/25/2022 9:33:44 AM / 5045</div>
<div class="t" style="left:791.31px;top:638.42px;font-size:21px;color:#1e1e1e;transform:scaleX(0.9394)">100</div>
<div class="t" style="left:953.20px;top:638.42px;font-size:21px;color:#1e1e1e">0</div>
<div class="t" style="left:1906.40px;top:638.42px;font-size:21px;color:#1e1e1e">0</div>
<div class="a" style="left:695px;top:640.5px;width:18px;height:17px;border:1.5px solid #cfcfcf;background:#fafafa"></div>
<div class="a" style="left:1172px;top:640.5px;width:18px;height:17px;border:1.5px solid #cfcfcf;background:#fafafa"></div>
<div class="t" style="left:1286.50px;top:638.42px;font-size:21px;color:#1e1e1e;transform:scaleX(0.9636)">Vibration 2</div>
<div class="t" style="left:1506.95px;top:638.42px;font-size:21px;color:#a9c6e6;transform:scaleX(0.9493)">(Empty)</div>
<svg class="a" style="left:1846.8px;top:637.7px" width="20" height="20" viewBox="0 0 22 22"><g fill="none" stroke="#555" stroke-width="1.75" stroke-linecap="round"><path d="M12.3 5.86 L14.6 3.56 A3.5 3.5 0 0 1 19.54 8.5 L16.0 12.04 A3.5 3.5 0 0 1 11.06 7.1"/><path d="M10.7 16.54 L8.4 18.84 A3.5 3.5 0 0 1 3.46 13.9 L7.0 10.36 A3.5 3.5 0 0 1 11.94 15.3"/></g></svg>
<svg class="a" style="left:1874px;top:641.0px" width="16" height="16" viewBox="0 0 16 16"><path d="M7.8 0.5 V13.5 M1 7 H14.6" stroke="#5a5a5a" stroke-width="1.7"/></svg>
<div class="t" style="left:350.79px;top:678.92px;font-size:21px;color:#1e1e1e;transform:scaleX(0.9583)">Linje 1  8/25/2022 9:33:44 AM / 5045</div>
<div class="t" style="left:791.31px;top:678.92px;font-size:21px;color:#1e1e1e;transform:scaleX(0.9394)">100</div>
<div class="t" style="left:953.20px;top:678.92px;font-size:21px;color:#1e1e1e">0</div>
<div class="t" style="left:1906.40px;top:678.92px;font-size:21px;color:#1e1e1e">0</div>
<div class="a" style="left:695px;top:681.0px;width:18px;height:17px;border:1.5px solid #cfcfcf;background:#fafafa"></div>
<div class="a" style="left:1172px;top:681.0px;width:18px;height:17px;border:1.5px solid #cfcfcf;background:#fafafa"></div>
<div class="t" style="left:1286.50px;top:678.92px;font-size:21px;color:#1e1e1e;transform:scaleX(0.9636)">Vibration 3</div>
<div class="t" style="left:1506.95px;top:678.92px;font-size:21px;color:#a9c6e6;transform:scaleX(0.9493)">(Empty)</div>
<svg class="a" style="left:1846.8px;top:678.2px" width="20" height="20" viewBox="0 0 22 22"><g fill="none" stroke="#555" stroke-width="1.75" stroke-linecap="round"><path d="M12.3 5.86 L14.6 3.56 A3.5 3.5 0 0 1 19.54 8.5 L16.0 12.04 A3.5 3.5 0 0 1 11.06 7.1"/><path d="M10.7 16.54 L8.4 18.84 A3.5 3.5 0 0 1 3.46 13.9 L7.0 10.36 A3.5 3.5 0 0 1 11.94 15.3"/></g></svg>
<svg class="a" style="left:1874px;top:681.5px" width="16" height="16" viewBox="0 0 16 16"><path d="M7.8 0.5 V13.5 M1 7 H14.6" stroke="#5a5a5a" stroke-width="1.7"/></svg>
<div class="t" style="left:350.79px;top:719.42px;font-size:21px;color:#1e1e1e;transform:scaleX(0.9583)">Linje 1  8/25/2022 9:33:44 AM / 5045</div>
<div class="t" style="left:791.31px;top:719.42px;font-size:21px;color:#1e1e1e;transform:scaleX(0.9394)">100</div>
<div class="t" style="left:953.20px;top:719.42px;font-size:21px;color:#1e1e1e">0</div>
<div class="t" style="left:1906.40px;top:719.42px;font-size:21px;color:#1e1e1e">0</div>
<div class="a" style="left:695px;top:721.5px;width:18px;height:17px;border:1.5px solid #cfcfcf;background:#fafafa"></div>
<div class="a" style="left:1172px;top:721.5px;width:18px;height:17px;border:1.5px solid #cfcfcf;background:#fafafa"></div>
<div class="t" style="left:1286.50px;top:719.42px;font-size:21px;color:#1e1e1e;transform:scaleX(0.9540)">Vibration 4</div>
<div class="t" style="left:1506.95px;top:719.42px;font-size:21px;color:#a9c6e6;transform:scaleX(0.9493)">(Empty)</div>
<svg class="a" style="left:1846.8px;top:718.7px" width="20" height="20" viewBox="0 0 22 22"><g fill="none" stroke="#555" stroke-width="1.75" stroke-linecap="round"><path d="M12.3 5.86 L14.6 3.56 A3.5 3.5 0 0 1 19.54 8.5 L16.0 12.04 A3.5 3.5 0 0 1 11.06 7.1"/><path d="M10.7 16.54 L8.4 18.84 A3.5 3.5 0 0 1 3.46 13.9 L7.0 10.36 A3.5 3.5 0 0 1 11.94 15.3"/></g></svg>
<svg class="a" style="left:1874px;top:722.0px" width="16" height="16" viewBox="0 0 16 16"><path d="M7.8 0.5 V13.5 M1 7 H14.6" stroke="#5a5a5a" stroke-width="1.7"/></svg>
<svg class="a" style="left:315px;top:276px" width="24" height="16" viewBox="0 0 24 16"><rect x="1" y="1.5" width="21.5" height="12.5" rx="3" fill="none" stroke="#6e6e6e" stroke-width="1.4"/><path d="M5 4.5 H8.5 M6.75 4.5 V11 M5 11 H8.5" stroke="#6e6e6e" stroke-width="1.1"/></svg>
<svg class="a" style="left:1477.5px;top:272.5px" width="20" height="25" viewBox="0 0 20 25"><path d="M1 0.5 H12 L19 7.5 V23.5 H1 Z" fill="#fbfcfe" stroke="#e8ecf2" stroke-width="1"/><path d="M12 0.5 V7.5 H19" fill="#eef1f6"/><rect x="3.5" y="9.5" width="12.5" height="10.5" fill="#8aa4c0"/><rect x="3.5" y="15.5" width="12.5" height="4.5" fill="#8a9098"/><path d="M2.5 15 L6 15 L8 11 L10 18.5 L12 13.5 L13.5 15 L17 15" fill="none" stroke="#2a6fb2" stroke-width="1.6"/></svg>
<div class="t" style="left:1507.54px;top:273.92px;font-size:21px;color:#46a6f0;transform:scaleX(0.9583)">Linje 1  8/25/2022 9:33:44 AM / 5045</div>
<div class="a" style="left:1277.8px;top:258.3px;width:194px;height:47.8px;border:4px solid #fc0303;background:#fff;border-radius:3px"></div>
<div class="a" style="left:1282px;top:262.5px;width:186px;height:2px;background:#f08a62"></div>
<div class="t" style="left:1291.08px;top:276.01px;font-size:17px;color:#111;font-weight:bold;transform:scaleX(1.0189);-webkit-text-stroke:0">Input 0 (Run Signal)</div>
<div class="a" style="left:1456px;top:271.5px;width:1.3px;height:24px;background:#111"></div>
<div class="a" style="left:1642px;top:267px;width:197px;height:34px;background:#000"></div>
<div class="a" style="left:308px;top:787px;width:1687px;height:21px;background:#e0e0e0;border-top:1.5px solid #b8b8b8;border-bottom:1.5px solid #b8b8b8"></div>
<div class="a" style="left:308px;top:787px;width:20px;height:21px;background:#fafafa;border:1.5px solid #b8b8b8"></div>
<div class="a" style="left:328px;top:787px;width:877px;height:21px;background:#fdfdfd;border:1.5px solid #b4b4b4;border-left:none"></div>
<div class="a" style="left:1976px;top:787px;width:19px;height:21px;background:#fafafa;border:1.5px solid #b8b8b8"></div>
<svg class="a" style="left:314px;top:792px" width="8" height="11" viewBox="0 0 8 11"><path d="M6.5 1 L1.5 5.5 L6.5 10 Z" fill="#555"/></svg>
<svg class="a" style="left:1983px;top:792px" width="8" height="11" viewBox="0 0 8 11"><path d="M1.5 1 L6.5 5.5 L1.5 10 Z" fill="#555"/></svg>
<svg class="a" style="left:320px;top:821.5px" width="14" height="16" viewBox="0 0 14 16"><rect x="1" y="1" width="2.5" height="13" fill="#c8c8c8"/><path d="M12.5 1 L4.5 7.5 L12.5 14 Z" fill="#c8c8c8"/></svg>
<svg class="a" style="left:355px;top:821.5px" width="12" height="16" viewBox="0 0 12 16"><path d="M10 1.5 L2 7.5 L10 13.5 Z" fill="#c8c8c8"/></svg>
<div class="a" style="left:381px;top:812px;width:32px;height:32px;background:#f8b39b;border:1.7px solid #f2703f"></div>
<svg class="a" style="left:390px;top:818px" width="14" height="20" viewBox="0 0 14 20"><path d="M7.5 3 L9.6 3 L9.6 18 L7.5 18 L7.5 5.8 L4 7.9 L3.7 5.9 Z" fill="#1a1a1a"/></svg>
<svg class="a" style="left:427px;top:821.5px" width="12" height="16" viewBox="0 0 12 16"><path d="M2 1.5 L10 7.5 L2 13.5 Z" fill="#555"/></svg>
<svg class="a" style="left:460px;top:821.5px" width="14" height="16" viewBox="0 0 14 16"><path d="M1.5 1 L9.5 7.5 L1.5 14 Z" fill="#c8c8c8"/><rect x="10.5" y="1" width="2.5" height="13" fill="#c8c8c8"/></svg>
<div class="t" style="left:1867.31px;top:820.01px;font-size:17px;color:#222;transform:scaleX(0.9921)">Page</div>
<div class="t" style="left:1924.56px;top:820.01px;font-size:17px;color:#222;transform:scaleX(1.0375)">1</div>
<div class="t" style="left:1952.80px;top:820.01px;font-size:17px;color:#222;transform:scaleX(1.1067)">of</div>
<div class="t" style="left:1974.56px;top:820.01px;font-size:17px;color:#222;transform:scaleX(1.0375)">1</div>
</div></body></html>
